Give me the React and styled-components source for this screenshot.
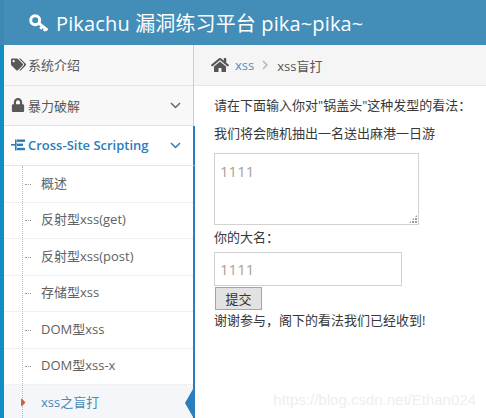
import React from "react";
import styled, { createGlobalStyle } from "styled-components";
import { FaTags, FaLock, FaHome, FaCaretRight } from "react-icons/fa";

const GlobalStyle = createGlobalStyle`
  html, body {
    margin: 0;
    padding: 0;
    width: 486px;
    height: 418px;
    overflow: hidden;
    background: #fff;
  }
  body {
    font-family: "Open Sans", "Noto Sans CJK SC", sans-serif;
    font-size: 13px;
    color: #393939;
  }
`;

const subItems = ["概述", "反射型xss(get)", "反射型xss(post)", "存储型xss", "DOM型xss", "DOM型xss-x"];

const Page = styled.div`
  position: relative;
  width: 486px;
  height: 418px;
  overflow: hidden;
  display: flex;
  flex-direction: column;
`;

const Navbar = styled.header`
  height: 45px;
  flex: none;
  background: #438eb9;
  color: #fff;
  display: flex;
  align-items: center;
  gap: 7px;
  padding-left: 25px;
  font-size: 20px;
  border-left: 4px solid #3f88b3;
  box-sizing: border-box;
`;

const Title = styled.span`
  letter-spacing: 0.14px;
`;

const Body = styled.div`
  flex: 1;
  display: flex;
  border-left: 4px solid #0f8fc5;
  min-height: 0;
`;

const Sidebar = styled.nav`
  width: 189px;
  flex: none;
  display: flex;
  flex-direction: column;
`;

const MenuRow = styled.div`
  position: relative;
  z-index: 1;
  height: 40px;
  box-sizing: border-box;
  flex: none;
  display: flex;
  align-items: center;
  padding: 0 10px 1px 7px;
  background: ${(p) => (p.$open ? "#fff" : "#f8f8f8")};
  border-bottom: 1px solid #e5e5e5;
  border-right: ${(p) => (p.$open ? "2px solid #2b7dbc" : "none")};
  margin-right: ${(p) => (p.$open ? "-2px" : "0")};
  color: ${(p) => (p.$open ? "#2b7dbc" : "#585858")};
  font-weight: ${(p) => (p.$open ? 600 : 400)};
  font-size: 13px;

  &:first-child {
    height: 41px;
  }
`;

const MenuIcon = styled.span`
  width: 17px;
  flex: none;
  display: flex;
  align-items: center;
  color: ${(p) => (p.$open ? "#2b7dbc" : "#585858")};
`;

const MenuLabel = styled.span`
  flex: 1;
  white-space: nowrap;
`;

const SubMenu = styled.ul`
  position: relative;
  z-index: 1;
  list-style: none;
  margin: 0 -2px 0 0;
  padding: 0;
  flex: 1;
  border-right: 2px solid #2b7dbc;

  &::before {
    content: "";
    position: absolute;
    top: 0;
    bottom: 0;
    left: 18px;
    border-left: 1px dotted #9dbdd6;
    z-index: 1;
  }
`;

const SubItem = styled.li`
  position: relative;
  height: 36.5px;
  box-sizing: border-box;
  display: flex;
  align-items: center;
  padding: 0 0 3px 37px;
  font-size: 13px;
  white-space: nowrap;
  color: ${(p) => (p.$active ? "#4b88b7" : "#616161")};
  background: ${(p) => (p.$active ? "#f4f6f9" : "#fff")};
  border-bottom: 1px dotted #e4e4e4;

  &::before {
    content: "";
    display: ${(p) => (p.$active ? "none" : "block")};
    position: absolute;
    left: 21px;
    top: 50%;
    width: 6px;
    border-top: 1px dotted #9a9a9a;
  }
`;

const ActiveCaret = styled(FaCaretRight)`
  position: absolute;
  left: 13px;
  top: 11px;
  font-size: 13px;
  color: #c86139;
  z-index: 2;
`;

const ActiveNotch = styled.span`
  position: absolute;
  right: 0;
  top: 4px;
  width: 0;
  height: 0;
  border-style: solid;
  border-width: 14px 8px 14px 0;
  border-color: transparent #2b7dbc transparent transparent;
`;

const Main = styled.main`
  flex: 1;
  min-width: 0;
  display: flex;
  flex-direction: column;
  border-left: 1px solid #ccc;
`;

const Breadcrumbs = styled.div`
  height: 41px;
  flex: none;
  box-sizing: border-box;
  background: #f5f5f5;
  border-bottom: 1px solid #e5e5e5;
  display: flex;
  align-items: center;
  padding-left: 17px;
  font-size: 13px;
  color: #555;
`;

const Crumb = styled.span`
  color: ${(p) => (p.$link ? "#4c8fbd" : "#555")};
  margin-left: ${(p) => (p.$link ? "6px" : "0")};
`;

const Content = styled.div`
  padding: 10px 0 0 20px;
  display: flex;
  flex-direction: column;
  align-items: flex-start;
  color: #393939;
  font-size: 13px;
`;

const Line = styled.div`
  height: 18px;
  line-height: 18px;
  white-space: nowrap;
  margin-bottom: ${(p) => p.$gap || 0}px;
`;

const CommentBox = styled.div`
  position: relative;
  width: 205px;
  height: 72px;
  box-sizing: border-box;
  border: 1px solid #d2d2d2;
  padding: 7px 5px;
  color: #a8a294;
  font-size: 15px;
  line-height: 20px;
  margin-bottom: 3px;

  &::after {
    content: "";
    position: absolute;
    right: 1px;
    bottom: 1px;
    width: 8px;
    height: 8px;
    background: radial-gradient(circle at 1px 1px, #a0a0a0 1px, transparent 1px) 0 0 / 3px 3px;
    clip-path: polygon(100% 0, 100% 100%, 0 100%);
  }
`;

const NameInput = styled.div`
  width: 188px;
  height: 34px;
  box-sizing: border-box;
  border: 1px solid #d2d2d2;
  padding: 0 5px;
  display: flex;
  align-items: center;
  color: #a8a294;
  font-size: 15px;
  margin-top: 6px;
`;

const SubmitButton = styled.button`
  width: 47px;
  height: 23px;
  margin: 1px 0 1px 1px;
  padding: 0;
  background: #e2e2e2;
  border: 1px solid #a5a5a5;
  color: #333;
  font-family: inherit;
  font-size: 13px;
`;

const Watermark = styled.span`
  position: absolute;
  right: 10px;
  bottom: 10px;
  font-family: "Liberation Sans", sans-serif;
  font-size: 15px;
  color: #eeeeee;
  white-space: nowrap;
`;

const KeyIcon = () => (
  <svg width="20" height="18" viewBox="0 0 20 18" fill="none">
    <circle cx="6.2" cy="6.2" r="4.5" stroke="#fff" strokeWidth="3" />
    <path d="M10 9.4l8.5 6.8M13.5 12.2l-2.2 2.6M16.6 14.7l-1.8 2.1" stroke="#fff" strokeWidth="2.8" />
  </svg>
);

const TreeIcon = () => (
  <svg width="14" height="12" viewBox="0 0 14 12" fill="#2b7dbc">
    <rect x="0" y="5" width="5" height="1.6" />
    <rect x="4" y="0.5" width="1.6" height="11" />
    <rect x="6" y="0.5" width="8" height="2.4" />
    <rect x="6" y="4.6" width="6" height="2.4" />
    <rect x="6" y="8.8" width="8" height="2.4" />
  </svg>
);

const ChevronSvg = styled.svg`
  margin-right: 2px;
  stroke: ${(p) => (p.$open ? "#2b7dbc" : "#666")};
`;

const Chevron = ({ $open }) => (
  <ChevronSvg $open={$open} width="11" height="7" viewBox="0 0 11 7" fill="none">
    <path d="M1 1l4.5 4.5L10 1" strokeWidth="1.5" />
  </ChevronSvg>
);

const SeparatorSvg = styled.svg`
  margin: 0 9px 0 8px;
`;

const Separator = () => (
  <SeparatorSvg width="6" height="10" viewBox="0 0 6 10" fill="none">
    <path d="M1 1l4 4-4 4" stroke="#b2b6bf" strokeWidth="1.5" />
  </SeparatorSvg>
);

export default function App() {
  return (
    <Page>
      <GlobalStyle />
      <Navbar>
        <KeyIcon />
        <Title>Pikachu 漏洞练习平台 pika~pika~</Title>
      </Navbar>
      <Body>
        <Sidebar>
          <MenuRow>
            <MenuIcon><FaTags size={15} /></MenuIcon>
            <MenuLabel>系统介绍</MenuLabel>
          </MenuRow>
          <MenuRow>
            <MenuIcon><FaLock size={14} /></MenuIcon>
            <MenuLabel>暴力破解</MenuLabel>
            <Chevron />
          </MenuRow>
          <MenuRow $open>
            <MenuIcon $open><TreeIcon /></MenuIcon>
            <MenuLabel>Cross-Site Scripting</MenuLabel>
            <Chevron $open />
          </MenuRow>
          <SubMenu>
            {subItems.map((item) => (
              <SubItem key={item}>{item}</SubItem>
            ))}
            <SubItem $active>
              <ActiveCaret />
              xss之盲打
              <ActiveNotch />
            </SubItem>
          </SubMenu>
        </Sidebar>
        <Main>
          <Breadcrumbs>
            <FaHome size={18} color="#555" />
            <Crumb $link>xss</Crumb>
            <Separator />
            <Crumb>xss盲打</Crumb>
          </Breadcrumbs>
          <Content>
            <Line $gap={10}>请在下面输入你对"锅盖头"这种发型的看法：</Line>
            <Line $gap={11}>我们将会随机抽出一名送出麻港一日游</Line>
            <CommentBox>1111</CommentBox>
            <Line>你的大名：</Line>
            <NameInput>1111</NameInput>
            <SubmitButton>提交</SubmitButton>
            <Line>谢谢参与，阁下的看法我们已经收到!</Line>
          </Content>
        </Main>
      </Body>
      <Watermark>https://blog.csdn.net/Ethan024</Watermark>
    </Page>
  );
}
